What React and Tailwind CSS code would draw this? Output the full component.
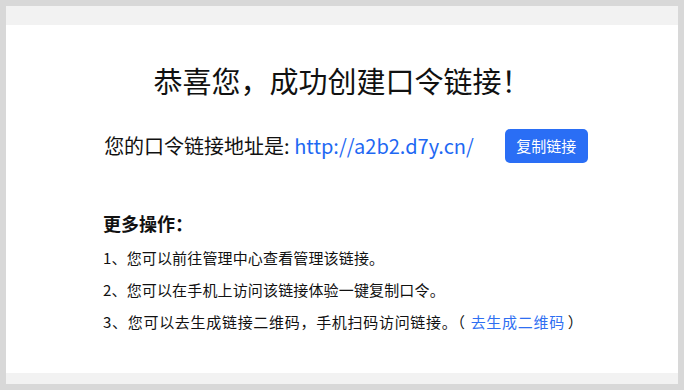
import React from "react";

const font = { fontFamily: '"Noto Sans CJK SC", "Noto Sans", sans-serif' };

function TipLine({ children, className = "" }) {
  return <div className={`h-8 flex items-center text-[15px] text-[#111] ${className}`}>{children}</div>;
}

export default function App() {
  return (
    <div className="w-[684px] h-[390px] bg-[#d8d8d8] p-[6px]" style={font}>
      <div className="h-full flex flex-col bg-white">
        <div className="h-[19px] bg-[#f2f2f2]" />

        <div className="flex-1 pt-[36px]">
          {/* Title */}
          <h1 className="h-10 flex items-center justify-center text-[29px] text-[#111] font-normal">
            恭喜您，成功创建口令链接！
          </h1>

          {/* Link row */}
          <div className="mt-[28px] flex items-center justify-center pl-[8px]">
            <span className="text-[20px] text-[#111]">
              您的口令链接地址是: <a className="text-[#1e68f3]">http://a2b2.d7y.cn/</a>
            </span>
            <button className="ml-[31px] h-[34px] w-[83px] rounded-[5px] bg-[#2a6ef5] text-white text-[15px] flex items-center justify-center">
              复制链接
            </button>
          </div>

          {/* More actions */}
          <div className="mt-[47px] pl-[97px]">
            <div className="h-[26px] flex items-center text-[18px] font-bold text-[#111]">更多操作：</div>
            <div className="mt-[6px]">
              <TipLine className="tracking-[0.15px]">1、您可以前往管理中心查看管理该链接。</TipLine>
              <TipLine className="tracking-[0.15px]">2、您可以在手机上访问该链接体验一键复制口令。</TipLine>
              <TipLine className="tracking-[0.7px]">
                3、您可以去生成链接二维码，手机扫码访问链接。（
                <a className="text-[#2f6ff2] pl-[5px] pr-[3px]">去生成二维码</a>）
              </TipLine>
            </div>
          </div>
        </div>

        <div className="h-[11px] bg-[#f2f2f2]" />
      </div>
    </div>
  );
}
